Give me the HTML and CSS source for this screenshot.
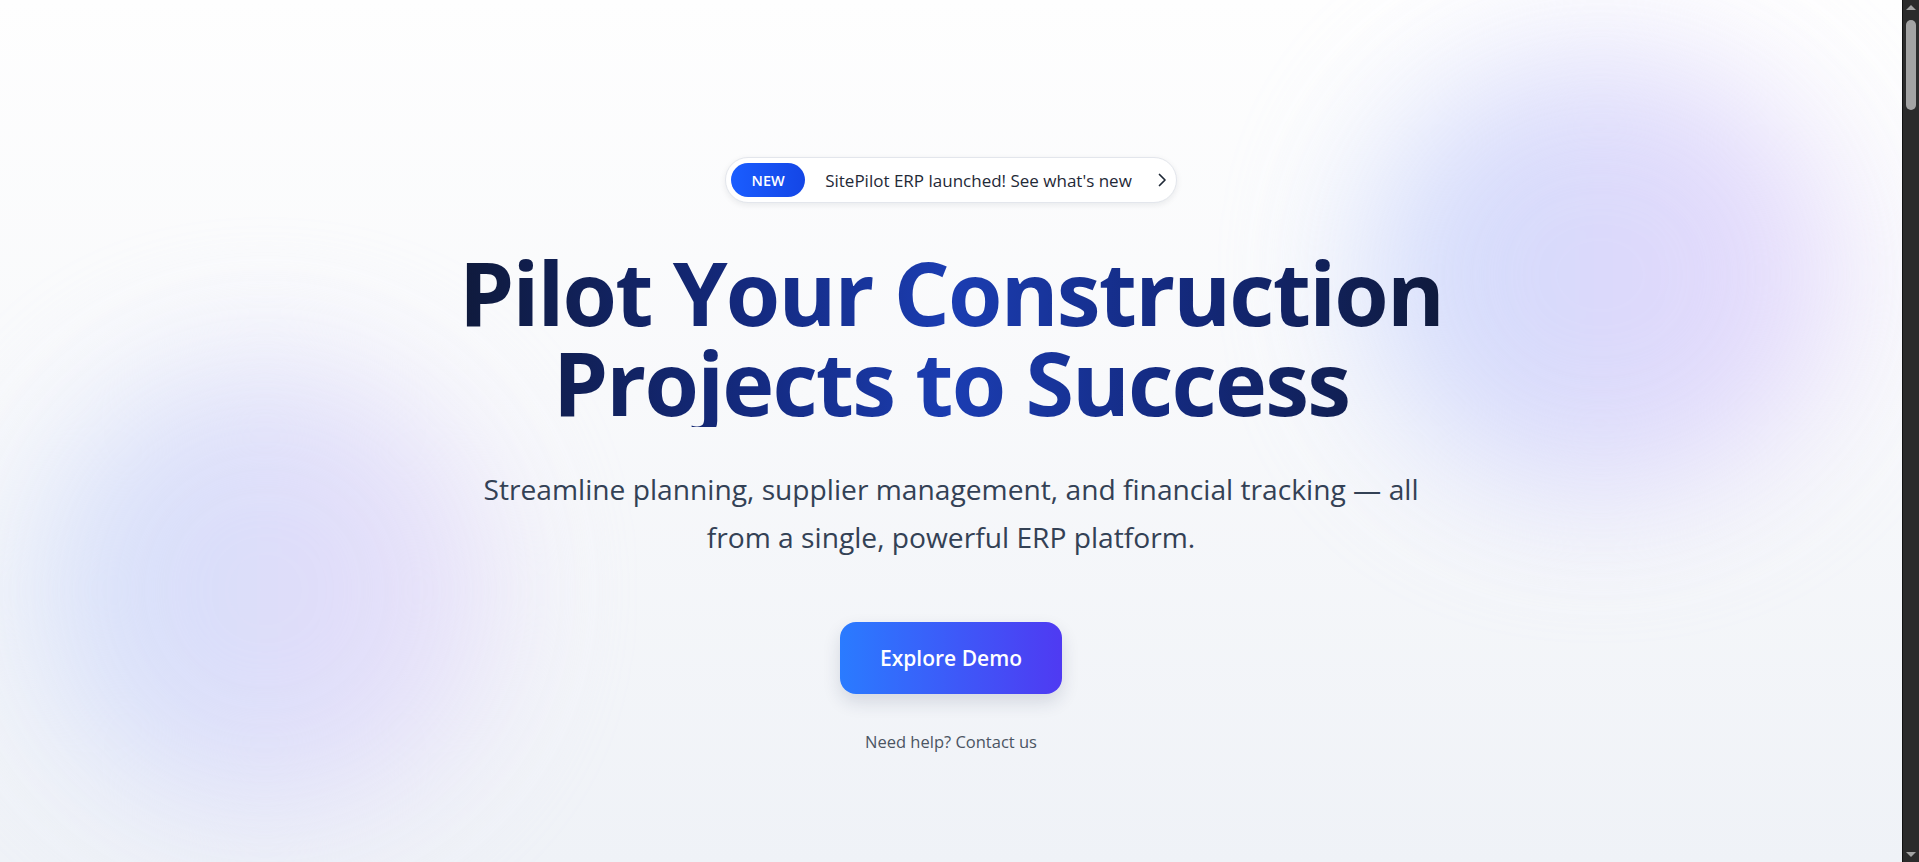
FILE: index.html
```html
<!DOCTYPE html>
<html lang="en">
<head>
<meta charset="utf-8">
<title>SitePilot ERP</title>
<link rel="stylesheet" href="styles.css">
</head>
<body>
<div class="window">
  <main class="hero">
    <div class="blob blob-right"></div>
    <div class="blob blob-left"></div>
    <div class="hero-inner">
      <a class="announce" href="#">
        <span class="announce-tag">NEW</span>
        <span class="announce-text">SitePilot ERP launched! See what's new</span>
        <svg class="announce-arrow" width="20" height="20" viewBox="0 0 20 20" fill="none"><path d="M7.5 4.5l5.5 5.5-5.5 5.5" stroke="#1f2937" stroke-width="1.7" stroke-linecap="round" stroke-linejoin="round"/></svg>
      </a>
      <h1 class="title">Pilot Your Construction<br>Projects to Success</h1>
      <p class="subtitle">Streamline planning, supplier management, and financial tracking — all from a single, powerful ERP platform.</p>
      <a class="cta" href="#">Explore Demo</a>
      <a class="help" href="#">Need help? Contact us</a>
    </div>
  </main>
  <div class="scrollbar">
    <span class="sb-arrow sb-up"></span>
    <span class="sb-thumb"></span>
    <span class="sb-arrow sb-down"></span>
  </div>
</div>
</body>
</html>
```

FILE: styles.css
```css
* {
  box-sizing: border-box;
}
html,
body {
  margin: 0;
  height: 100%;
  overflow: hidden;
}
body {
  font-family: "Open Sans", "Noto Sans", "Liberation Sans", sans-serif;
  background: #f0f3f8;
  color: #1f2937;
}
a {
  text-decoration: none;
}
.window {
  display: flex;
  height: 862px;
}
.hero {
  position: relative;
  flex: 1;
  overflow: hidden;
  background: linear-gradient(180deg, #fefefe 0%, #f8f9fb 45%, #eff2f7 100%);
}
.blob {
  position: absolute;
  border-radius: 50%;
  filter: blur(70px);
  pointer-events: none;
}
.blob-right {
  left: 1365px;
  top: 55px;
  width: 470px;
  height: 440px;
  background: linear-gradient(90deg, #c9d8fc 0%, #d6d4fb 50%, #e2d3fc 100%);
  opacity: 0.85;
}
.blob-left {
  left: 40px;
  top: 365px;
  width: 450px;
  height: 450px;
  background: linear-gradient(90deg, #d0defa 0%, #dcdbfa 55%, #e6dcf9 100%);
  opacity: 0.9;
}
.hero-inner {
  position: relative;
  display: flex;
  flex-direction: column;
  align-items: center;
  padding-top: 157px;
  text-align: center;
}
.announce {
  display: flex;
  align-items: center;
  height: 46px;
  padding: 0 4px 0 5px;
  background: #ffffff;
  border: 1px solid #e3e6ec;
  border-radius: 999px;
  box-shadow: 0 2px 6px rgba(15, 23, 42, 0.08);
}
.announce-tag {
  display: flex;
  align-items: center;
  justify-content: center;
  width: 74px;
  height: 34px;
  border-radius: 999px;
  background: linear-gradient(90deg, #1a5dff, #1446e6);
  color: #ffffff;
  font-size: 14.5px;
  font-weight: 600;
}
.announce-text {
  margin-left: 20px;
  font-size: 17px;
  font-weight: 500;
  color: #1f2937;
}
.announce-arrow {
  margin-left: 20px;
}
.title {
  margin: 44px 0 0;
  display: inline-block;
  font-size: 88px;
  line-height: 90px;
  font-weight: 700;
  letter-spacing: -1.8px;
  background: linear-gradient(90deg, #0f1a3c 0%, #142a80 30%, #1b3db2 50%, #142a80 72%, #0f1a3c 100%);
  -webkit-background-clip: text;
  background-clip: text;
  color: transparent;
}
.subtitle {
  margin: 38px 0 0;
  max-width: 965px;
  font-size: 28.2px;
  line-height: 48px;
  color: #334155;
}
.cta {
  margin-top: 61px;
  display: flex;
  align-items: center;
  justify-content: center;
  width: 222px;
  height: 72px;
  border-radius: 16px;
  background: linear-gradient(90deg, #2a7bff, #4f3af2);
  color: #ffffff;
  font-size: 21px;
  font-weight: 600;
  box-shadow: 0 8px 18px rgba(30, 41, 80, 0.14);
}
.help {
  margin-top: 36px;
  font-size: 16.5px;
  line-height: 24px;
  color: #4b5563;
}
.scrollbar {
  width: 17px;
  display: flex;
  flex-direction: column;
  align-items: center;
  background: #2b2b2b;
  border-left: 1px solid #111111;
}
.sb-arrow {
  width: 0;
  height: 0;
  border-left: 5px solid transparent;
  border-right: 5px solid transparent;
}
.sb-up {
  margin-top: 5px;
  border-bottom: 5px solid #a3a3a3;
}
.sb-thumb {
  margin-top: 10px;
  width: 10px;
  height: 90px;
  border-radius: 5px;
  background: #a3a3a3;
}
.sb-down {
  margin-top: auto;
  margin-bottom: 5px;
  border-top: 5px solid #a3a3a3;
}
```
